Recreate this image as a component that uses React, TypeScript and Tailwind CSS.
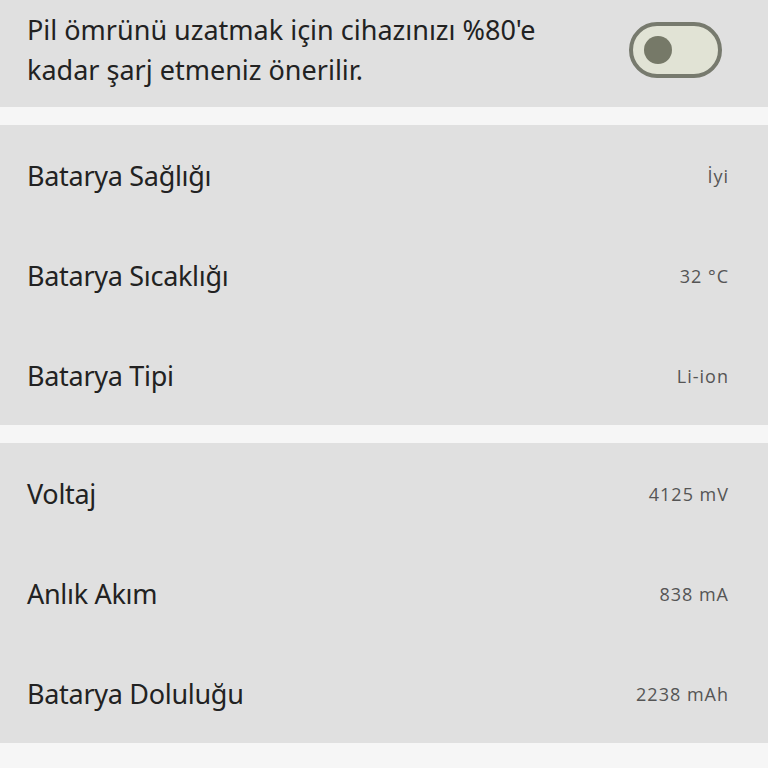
import React from 'react';

const groups: { label: string; value: string }[][] = [
  [
    { label: 'Batarya Sağlığı', value: 'İyi' },
    { label: 'Batarya Sıcaklığı', value: '32 °C' },
    { label: 'Batarya Tipi', value: 'Li-ion' },
  ],
  [
    { label: 'Voltaj', value: '4125 mV' },
    { label: 'Anlık Akım', value: '838 mA' },
    { label: 'Batarya Doluluğu', value: '2238 mAh' },
  ],
];

const Row: React.FC<{ label: string; value: string }> = ({ label, value }) => (
  <div className="h-[100px] flex items-center justify-between pl-[27px] pr-[39px]">
    <span className="text-[27px] text-[#222222] tracking-[-0.3px] pt-[2px]">{label}</span>
    <span className="text-[18px] text-[#555555] tracking-[1px] pt-[3px] font-['Open_Sans',sans-serif]">{value}</span>
  </div>
);

export default function App() {
  return (
    <div className="min-h-[768px] bg-[#f6f6f6] font-['Noto_Sans',sans-serif]">
      <div className="h-[107px] bg-[#e0e0e0] flex items-center justify-between pl-[27px] pr-[46px]">
        <p className="text-[27px] leading-[40px] text-[#222222] tracking-[0px] w-[560px] pb-[7px]">
          Pil ömrünü uzatmak için cihazınızı %80'e
          <br />
          kadar şarj etmeniz önerilir.
        </p>
        <button className="w-[93px] h-[56px] mb-[8px] rounded-full border-[4px] border-[#777a6e] bg-[#e1e3d5] flex items-center pl-[11px]">
          <span className="w-[28px] h-[28px] rounded-full bg-[#767968]" />
        </button>
      </div>
      {groups.map((g, i) => (
        <div key={i} className="mt-[18px] bg-[#e0e0e0]">
          {g.map((r) => (
            <Row key={r.label} {...r} />
          ))}
        </div>
      ))}
    </div>
  );
}
